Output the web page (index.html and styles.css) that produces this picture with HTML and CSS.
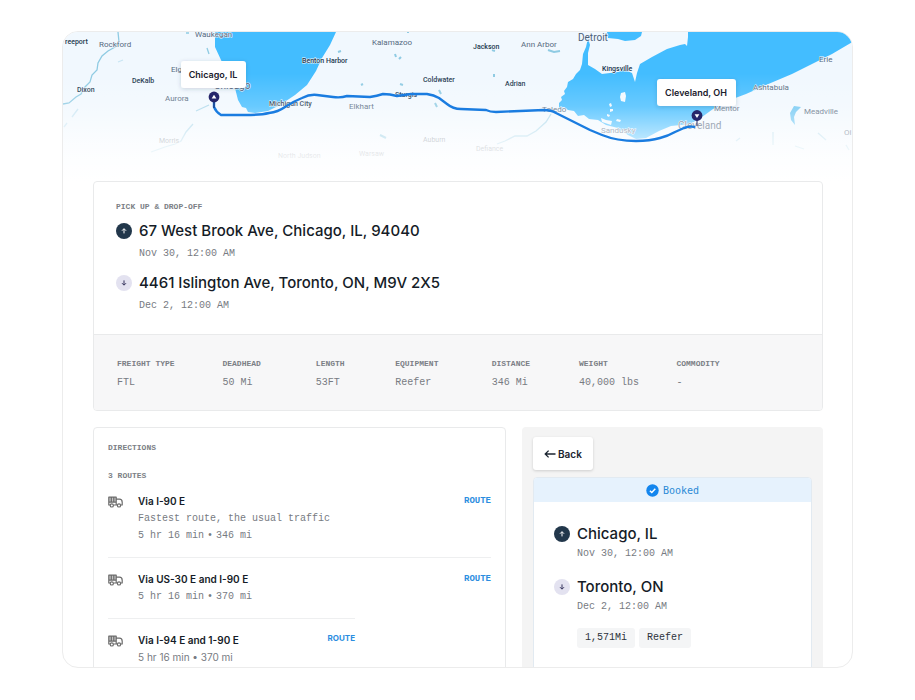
FILE: index.html
```html
<!DOCTYPE html>
<html lang="en">
<head>
<meta charset="utf-8">
<title>Load details</title>
<link rel="stylesheet" href="styles.css">
</head>
<body>
<svg class="defs" aria-hidden="true">
  <symbol id="up" viewBox="0 0 16 16"><circle cx="8" cy="8" r="8" fill="#22374b"/><path d="M8 10.4V5.8M6 7.7l2-2 2 2" fill="none" stroke="#fff" stroke-width="1"/></symbol>
  <symbol id="down" viewBox="0 0 16 16"><circle cx="8" cy="8" r="8" fill="#e3e2f0"/><path d="M8 5.4V10M6 8.2l2 2 2-2" fill="none" stroke="#34335c" stroke-width="1"/></symbol>
  <symbol id="truck" viewBox="0 0 15 12"><path d="M.8 1.200h7.400v5H.8z" fill="#c4c4c4"/><g fill="none" stroke="#6b6b6b" stroke-width="1.200" stroke-linejoin="round"><path d="M2 9H.8V1.200h7.400V9H5.600M8.200 3.200h3.200c1.600 0 2.800 1.400 2.800 3V9h-1.400M9.400 9H8.200M3.300 1.200v4.400M5.800 1.200v4.400M.8 6.200h7.400"/><circle cx="3.800" cy="9.400" r="1.600" fill="#fff"/><circle cx="11" cy="9.400" r="1.600" fill="#fff"/></g></symbol>
</svg>
<main class="shell">
  <svg class="map" viewBox="63 32 789 149" preserveAspectRatio="xMidYMin slice" role="img" aria-label="Route from Chicago, IL to Cleveland, OH">
    <defs>
      <linearGradient id="fade" gradientUnits="userSpaceOnUse" x1="0" y1="32" x2="0" y2="181">
        <stop offset="0" stop-color="#fff" stop-opacity="0"/>
        <stop offset=".28" stop-color="#fff" stop-opacity="0"/>
        <stop offset=".5" stop-color="#fff" stop-opacity=".2"/>
        <stop offset=".62" stop-color="#fff" stop-opacity=".44"/>
        <stop offset=".74" stop-color="#fff" stop-opacity=".68"/>
        <stop offset=".86" stop-color="#fff" stop-opacity=".86"/>
        <stop offset="1" stop-color="#fff" stop-opacity="1"/>
      </linearGradient>
      <filter id="lift" x="-20%" y="-40%" width="140%" height="190%"><feDropShadow dx="0" dy="1" stdDeviation="2" flood-color="#1d3b5a" flood-opacity=".2"/></filter>
    </defs>
    <rect x="63" y="32" width="789" height="149" fill="#f1f8fe"/>
    <g fill="#43bdff">
      <path d="M215 32v15l6 13 7 15 7 13 3 12 4 7 4 1 2 4 7 1 13-2 12-6 15-10 12-10 9-14 6-13 8-13 6-13z"/>
      <path d="M588 38l-2 9-3 7-1 10-2 6-4 4-3 5-5 3-1 5-3 4 1 3-4 3 1 3-3 3v5l5-1 4 3 6 1 4 5 6-1 5 4 9 1 8 5 12 3 10 7 8 4 10-1 13-7 12-5 10-1 11-2 10-6 11-8 17-9 16-6 20-9 26-11 20-10 20-10 24-14V32H688v5l-1 9-2-2-5 1-13 4-15 8-12 7-3 9-2 9-3-9-7-3-7 2-16 2-7-5-7-4v-12l2-8-2-7z"/>
      <path d="M607 32l1 6 10 1 7 2 10-1 6-4 1-4z"/>
    </g>
    <g fill="#f1f8fe">
      <path d="M621 93l4-1 1 4-1 6-4-1-1-4zM609 104l2-1 1 3-2 1zM610 109l3 0 0 2-3 1zM617 119l4 1-1 2-4-1zM607 114l3 1-1 2-2-1zM601 118l5 2 6 1-1 4-9-3z"/>
    </g>
    <g fill="none" stroke="#8fcbe3" stroke-width="1.3">
      <path d="M118 32l1 10-4 5-7 4-6 5-4 7-1 7-5 5-2 7-5 5-4 7-5 3-7 6-6 1"/>
      <path d="M209 105l-13 6M193 124l-7 8-5 9-6 3-10 3-14 5" opacity=".7"/>
      <path d="M551 114l-5 8-10 9-9 5-12 0-10 5-8 3" opacity=".7"/>
      <path d="M186 33l3 0M207 48l2 6" /><path d="M72 117l6-8M64 127l3-4M118 62l5-2" opacity=".4"/>
      <path d="M407 32h2M338 52l3-1M395 54l1 3M399 59l2-2M361 85l2-1M400 84l3 1M439 90l2 4M435 103l2 4M494 74v3M492 50l3 1M548 50l6 2 6-1M380 135l6 3" stroke-width="2"/>
      <path d="M773 132v13M736 141l4-3M795 146l9 3M818 133l8 7M846 145l3 5" opacity=".6"/>
    </g>
    <path d="M801 107l-7-1-4 7 1 7 4 5-1-8 2-5z" fill="#6fc7f3"/>
    <g class="town">
      <text x="65" y="44">reeport</text><text x="77" y="92">Dixon</text><text x="132" y="83">DeKalb</text>
      <text x="302" y="63">Benton Harbor</text><text x="269" y="106">Michigan City</text><text x="395" y="97">Sturgis</text>
      <text x="473" y="49">Jackson</text><text x="423" y="82">Coldwater</text><text x="505" y="86">Adrian</text><text x="602" y="71">Kingsville</text>
    </g>
    <g class="city">
      <text x="99" y="47">Rockford</text><text x="195" y="37">Waukegan</text><text x="171" y="72">Elgin</text><text x="165" y="101">Aurora</text>
      <text x="372" y="45">Kalamazoo</text><text x="349" y="109">Elkhart</text><text x="521" y="47">Ann Arbor</text><text x="542" y="112">Toledo</text>
      <text x="819" y="62">Erie</text><text x="753" y="90">Ashtabula</text><text x="804" y="114">Meadville</text><text x="714" y="111">Mentor</text>
      <text x="601" y="133">Sandusky</text><text x="844" y="135">Oi</text>
    </g>
    <g class="town faint">
      <text x="159" y="143">Morris</text><text x="278" y="158">North Judson</text><text x="359" y="156">Warsaw</text><text x="423" y="142">Auburn</text><text x="476" y="151">Defiance</text>
    </g>
    <g class="metro">
      <text x="578" y="41">Detroit</text><text x="214" y="89">Chicago</text><text x="678" y="129">Cleveland</text>
    </g>
    <rect x="63" y="32" width="789" height="150" fill="url(#fade)"/>
    <path d="M214 98v9q2 5 7 8h24q16 0 24-2 9-1 16-6t17-9q8-4 15-3l16 2q8 1 14-1l23 1q7-1 13-3 7 0 14 2l14-2h16q7 1 12 4l8 6q6 5 14 5l25 1q4 2 10 2l48-2q7 0 12 3l34 17 12 5q15 6 34 6 14 0 24-3 8-2 15-6l9-4q6-2 11-1" fill="none" stroke="#1a7ce0" stroke-width="2.400" stroke-linejoin="round"/>
    <path d="M214 98v10M697 116v10" stroke="#23265f" stroke-width="1"/>
    <circle cx="214" cy="97" r="5.400" fill="#26266b"/><path d="M214 94.700l2.400 3.800h-4.800z" fill="#fff"/>
    <circle cx="697" cy="115.500" r="5.400" fill="#26266b"/><path d="M697 118l2.400-3.800h-4.800z" fill="#fff"/>
    <g fill="#fff" filter="url(#lift)"><rect x="181" y="61" width="65" height="27" rx="3"/><rect x="657" y="79" width="79" height="27" rx="3"/></g>
    <g class="pin-label"><text x="213" y="78">Chicago, IL</text><text x="696" y="96">Cleveland, OH</text></g>
  </svg>

  <div class="content">
    <section class="panel">
      <div class="stops">
        <h2 class="label">PICK UP &amp; DROP-OFF</h2>
        <div class="stop">
          <svg class="dot" aria-hidden="true"><use href="#up"/></svg>
          <div><p class="place">67 West Brook Ave, Chicago, IL, 94040</p><p class="mono">Nov 30, 12:00 AM</p></div>
        </div>
        <div class="stop">
          <svg class="dot" aria-hidden="true"><use href="#down"/></svg>
          <div><p class="place">4461 Islington Ave, Toronto, ON, M9V 2X5</p><p class="mono">Dec 2, 12:00 AM</p></div>
        </div>
      </div>
      <dl class="facts">
        <div><dt class="label">FREIGHT TYPE</dt><dd class="mono">FTL</dd></div>
        <div><dt class="label">DEADHEAD</dt><dd class="mono">50 Mi</dd></div>
        <div><dt class="label">LENGTH</dt><dd class="mono">53FT</dd></div>
        <div><dt class="label">EQUIPMENT</dt><dd class="mono">Reefer</dd></div>
        <div><dt class="label">DISTANCE</dt><dd class="mono">346 Mi</dd></div>
        <div><dt class="label">WEIGHT</dt><dd class="mono">40,000 lbs</dd></div>
        <div><dt class="label">COMMODITY</dt><dd class="mono">-</dd></div>
      </dl>
    </section>

    <div class="columns">
      <section class="panel directions">
        <h2 class="label">DIRECTIONS</h2>
        <h3 class="label count">3 ROUTES</h3>
        <ul class="routes">
          <li class="route">
            <svg class="truck" aria-hidden="true"><use href="#truck"/></svg>
            <div class="route-text"><p class="via">Via I-90 E</p><p class="mono line">Fastest route, the usual traffic</p><p class="mono line">5 hr 16 min<span class="bullet">•</span>346 mi</p></div>
            <a class="link" href="#">ROUTE</a>
          </li>
          <li class="route">
            <svg class="truck" aria-hidden="true"><use href="#truck"/></svg>
            <div class="route-text"><p class="via">Via US-30 E and I-90 E</p><p class="mono line">5 hr 16 min<span class="bullet">•</span>370 mi</p></div>
            <a class="link" href="#">ROUTE</a>
          </li>
          <li class="route narrow">
            <svg class="truck" aria-hidden="true"><use href="#truck"/></svg>
            <div class="route-text"><p class="via">Via I-94 E and 1-90 E</p><p class="sans line">5 hr 16 min • 370 mi</p></div>
            <a class="link sans-link" href="#">ROUTE</a>
          </li>
        </ul>
      </section>

      <aside class="side">
        <button class="back" type="button">
          <svg width="12" height="10" viewBox="0 0 12 10" aria-hidden="true"><path d="M11.500 5H1.200M4.600 1.600L1.200 5l3.400 3.400" fill="none" stroke="#1b2430" stroke-width="1.300"/></svg>Back
        </button>
        <div class="booking">
          <div class="status">
            <svg width="13" height="13" viewBox="0 0 13 13" aria-hidden="true"><circle cx="6.500" cy="6.500" r="6.200" fill="#1486ee"/><path d="M3.900 6.700l1.900 1.800 3.500-3.700" fill="none" stroke="#fff" stroke-width="1.500"/></svg>Booked
          </div>
          <div class="trip">
            <div class="stop">
              <svg class="dot" aria-hidden="true"><use href="#up"/></svg>
              <div><p class="place">Chicago, IL</p><p class="mono">Nov 30, 12:00 AM</p></div>
            </div>
            <div class="stop">
              <svg class="dot" aria-hidden="true"><use href="#down"/></svg>
              <div><p class="place">Toronto, ON</p><p class="mono">Dec 2, 12:00 AM</p>
                <div class="chips"><span class="chip">1,571Mi</span><span class="chip">Reefer</span></div>
              </div>
            </div>
          </div>
        </div>
      </aside>
    </div>
  </div>
</main>
</body>
</html>
```

FILE: styles.css
```css
* { box-sizing: border-box; margin: 0; padding: 0; }

body {
  height: 100vh;
  padding: 31px 62px 32px;
  background: #fff;
  color: #151c27;
  font-family: Inter, "Liberation Sans", sans-serif;
  overflow: hidden;
}

.defs { position: absolute; width: 0; height: 0; }

.shell {
  height: 100%;
  border: 1px solid #ececec;
  border-radius: 16px;
  overflow: hidden;
}

.map { display: block; width: 100%; height: 149px; }
.map text { font-family: Roboto, sans-serif; }
.town { font-size: 7px; font-weight: 500; fill: #24384f; stroke: #f1f8fe; stroke-width: 1px; paint-order: stroke; }
.town.faint { font-weight: 400; fill: #7d8894; }
.city { font-size: 8px; fill: #566a80; stroke: #f1f8fe; stroke-width: 1px; paint-order: stroke; }
.metro { font-size: 10px; fill: #4c6078; stroke: #f1f8fe; stroke-width: 1px; paint-order: stroke; }
.map .pin-label text { font-family: Inter, sans-serif; font-size: 9px; font-weight: 600; fill: #1a202c; text-anchor: middle; }

.content { padding: 0 29px 0 30px; }

.panel {
  border: 1px solid #e9eaeb;
  border-radius: 4px;
  background: #fff;
  overflow: hidden;
}

.label {
  font: bold 8px/12px "Liberation Mono", monospace;
  color: #7c7f86;
}
.mono { font: 10px/14px "Liberation Mono", monospace; color: #777b82; }

.stops { padding: 19px 22px 21px; }
.stops .label { margin-bottom: 7px; }
.stop { display: flex; gap: 7px; }
.stop + .stop { margin-top: 11px; }
.dot { flex: none; width: 16px; height: 16px; margin-top: 3px; }
.place { font-size: 15px; font-weight: 500; line-height: 22px; margin-bottom: 5px; }

.facts {
  display: grid;
  grid-template-columns: 105fr 93fr 79fr 96fr 87fr 97fr 123fr;
  padding: 23px 22px 20px 23px;
  border-top: 1px solid #e9eaeb;
  background: #f7f7f8;
}
.facts .label { margin-bottom: 6px; }

.columns {
  display: grid;
  grid-template-columns: 413fr 301fr;
  gap: 16px;
  margin-top: 16px;
}

.directions { padding: 14px 14px 24px; }
.count { margin-top: 16px; }
.routes { list-style: none; }
.route { display: flex; align-items: flex-start; padding: 12px 0 13px; }
.route:first-child { padding-top: 10px; }
.route + .route { border-top: 1px solid #eeeff0; }
.route.narrow { max-width: 247px; }
.truck { flex: none; width: 15px; height: 12px; margin: 4px 15px 0 0; }
.route-text { flex: 1; }
.via { font-size: 10px; font-weight: 600; line-height: 18px; }
.line { line-height: 17px; }
.sans { font-size: 10px; color: #777b82; }
.bullet { display: inline-block; width: 12px; text-align: center; }
.link { margin-top: 2px; font: bold 9px/14px "Liberation Mono", monospace; color: #2b8de0; text-decoration: none; }
.sans-link { margin-top: 0; font-family: Inter, sans-serif; font-size: 8px; }

.side { padding: 10px 11px 0; border-radius: 4px 4px 0 0; background: #f4f4f4; }
.back {
  display: flex;
  align-items: center;
  gap: 2px;
  height: 33px;
  padding: 0 11px;
  border: 0;
  border-radius: 3px;
  background: #fff;
  box-shadow: 0 1px 3px rgba(0, 0, 0, .16);
  color: #1b2430;
  font: 600 10px Inter, sans-serif;
}
.booking {
  margin-top: 7px;
  border: 1px solid #e2eaf1;
  border-radius: 4px;
  background: #fff;
  overflow: hidden;
}
.status {
  display: flex;
  align-items: center;
  justify-content: center;
  gap: 4px;
  height: 24px;
  background: #e6f2fd;
  color: #2b8ad6;
  font: 10px "DejaVu Sans Mono", monospace;
}
.trip { padding: 21px 20px 60px; }
.trip .place { margin-bottom: 2px; }
.trip .stop + .stop { margin-top: 15px; }
.chips { display: flex; gap: 4px; margin-top: 14px; }
.chip {
  padding: 3px 8px;
  border-radius: 3px;
  background: #f4f5f6;
  color: #2c323b;
  font: 10px/14px "Liberation Mono", monospace;
}
```
